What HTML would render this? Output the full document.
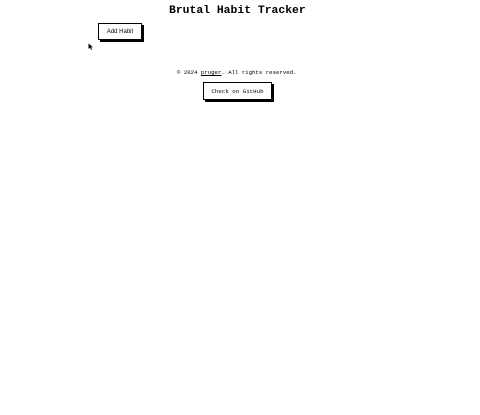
<!DOCTYPE html>
<html><head><style>
body{margin:0;background:#fff;width:480px;height:415px;position:relative;font-family:"Liberation Mono",monospace;color:#000}
.t{position:absolute;left:169px;top:5px;font-size:11.4px;font-weight:bold;white-space:nowrap}
.b1{position:absolute;left:98px;top:23px;width:42px;height:15px;border:1px solid #000;box-shadow:2px 2px 0 #000;font-family:"Liberation Sans",sans-serif;font-size:6px;display:flex;align-items:center;justify-content:center;background:#fff}
.f{position:absolute;left:177px;top:69px;font-size:5.7px;white-space:nowrap}
.f u{text-decoration:underline}
.b2{position:absolute;left:203px;top:82px;width:67px;height:16px;border:1px solid #000;box-shadow:2px 2px 0 #000;font-size:5.8px;display:flex;align-items:center;justify-content:center;background:#fff}
</style></head><body>
<div class="t">Brutal Habit Tracker</div>
<div class="b1">Add Habit</div>
<svg style="position:absolute;left:88px;top:43px" width="6" height="8"><path d="M0.5 0.5 L0.5 6 L2 4.6 L3.2 7 L4 6.6 L3 4.3 L5 4.3 Z" fill="#000"/></svg>
<div class="f">© 2024 <u>pruger</u>. All rights reserved.</div>
<div class="b2">Check on GitHub</div>
</body></html>
